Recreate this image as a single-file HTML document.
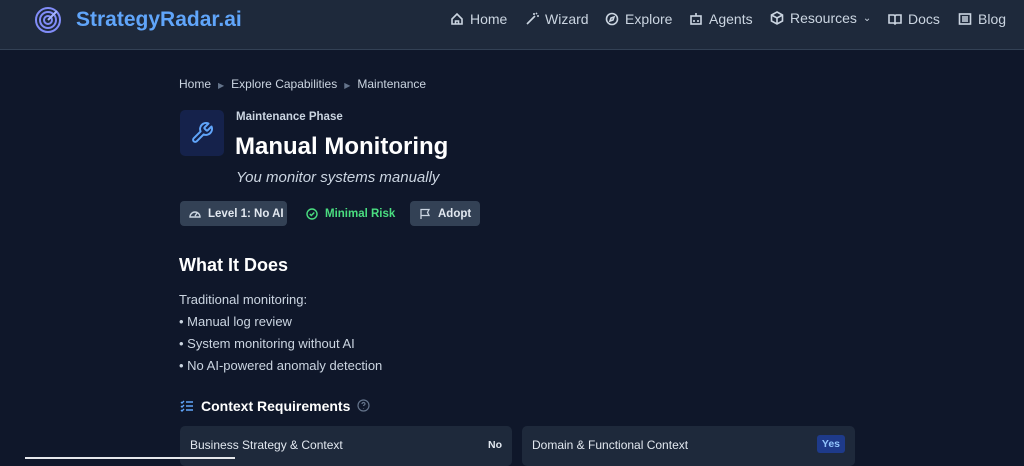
<!DOCTYPE html>
<html><head><style>
*{margin:0;padding:0;box-sizing:border-box}
body{width:1024px;height:459px;overflow:hidden;background:#0f172a;font-family:"Liberation Sans",sans-serif;color:#e2e8f0;position:relative}
.hdr{position:absolute;left:0;top:0;width:1024px;height:50px;background:#1e293b;border-bottom:1px solid #334155}
.logo{position:absolute;left:34px;top:6px}
.brand{position:absolute;left:76px;top:8px;font-size:21px;font-weight:bold;color:#60a5fa}
.nav{position:absolute;top:11px;font-size:14px;color:#cbd5e1;display:flex;align-items:center;gap:6px;white-space:nowrap}
.nav svg{stroke:#cbd5e1;fill:none;stroke-width:1.6}
.ab{position:absolute;white-space:nowrap}
.crumb{left:179px;top:77px;font-size:12px;color:#cbd5e1}
.crumb span{color:#64748b;margin:0 7px;font-size:8px}
.icon{left:180px;top:110px;width:44px;height:46px;background:#172554;border-radius:5px;opacity:.8}
.badge{position:absolute;top:201px;height:25px;border-radius:4px;font-size:11.5px;font-weight:bold;display:flex;align-items:center;gap:7px;padding:0 9px;white-space:nowrap}
.badge svg{flex-shrink:0}
.card{position:absolute;top:426px;height:40px;background:#1e293b;border-radius:5px;font-size:12px;color:#e2e8f0;padding:12px 10px}
.card b{position:absolute;right:10px;top:13px;font-size:10.5px}
</style></head><body>
<div class="hdr">
<svg class="logo" width="28" height="28" viewBox="0 0 28 28" fill="none" stroke="#818cf8" stroke-width="2"><circle cx="14" cy="14" r="12"/><circle cx="14" cy="14" r="8"/><circle cx="14" cy="14" r="4"/><path d="M14 14L23 5" stroke="#a5b4fc"/></svg>
<div class="brand">StrategyRadar.ai</div>
<div class="nav" style="left:450px"><svg width="14" height="14" viewBox="0 0 14 14"><path d="M2 7L7 2l5 5v5H2z M5.5 12V9h3v3"/></svg>Home</div>
<div class="nav" style="left:525px"><svg width="14" height="14" viewBox="0 0 14 14"><path d="M2 12L10 4M9 1v2M12 4h2M11 2l1-1"/></svg>Wizard</div>
<div class="nav" style="left:605px"><svg width="14" height="14" viewBox="0 0 14 14"><circle cx="7" cy="7" r="5.5"/><path d="M9 5L6 6 5 9l3-1z"/></svg>Explore</div>
<div class="nav" style="left:689px"><svg width="14" height="14" viewBox="0 0 14 14"><rect x="2" y="4" width="10" height="8"/><path d="M7 1v3M5 8v2M9 8v2"/></svg>Agents</div>
<div class="nav" style="left:770px;top:10px"><svg width="14" height="14" viewBox="0 0 14 14"><path d="M7 1l5.5 3v6L7 13 1.5 10V4zM1.5 4L7 7l5.5-3M7 7v6"/></svg>Resources <span style="font-size:10px">⌄</span></div>
<div class="nav" style="left:888px"><svg width="14" height="14" viewBox="0 0 14 14"><path d="M1 3h5l1 1 1-1h5v8H8l-1 1-1-1H1zM7 4v8"/></svg>Docs</div>
<div class="nav" style="left:958px"><svg width="14" height="14" viewBox="0 0 14 14"><rect x="1.5" y="2" width="11" height="10"/><path d="M4 5h6M4 7h6M4 9h6"/></svg>Blog</div>
</div>
<div class="ab crumb">Home<span>▶</span>Explore Capabilities<span>▶</span>Maintenance</div>
<div class="ab icon"></div>
<svg class="ab" style="left:190px;top:121px" width="24" height="24" viewBox="0 0 24 24" fill="none" stroke="#60a5fa" stroke-width="2" stroke-linecap="round" stroke-linejoin="round"><path d="M14.7 6.3a1 1 0 000 1.4l1.6 1.6a1 1 0 001.4 0l3.8-3.8a6 6 0 01-7.9 7.9l-6.9 6.9a2.1 2.1 0 01-3-3l6.9-6.9a6 6 0 017.9-7.9z"/></svg>
<div class="ab" style="left:236px;top:111px;font-size:11.5px;font-weight:bold;color:#cbd5e1">Maintenance Phase</div>
<div class="ab" style="left:235px;top:133px;font-size:24px;font-weight:bold;color:#fff">Manual Monitoring</div>
<div class="ab" style="left:236px;top:169px;font-size:15px;font-style:italic;color:#cbd5e1">You monitor systems manually</div>
<div class="badge" style="left:180px;width:107px;background:#334155;color:#e2e8f0"><svg width="12" height="12" viewBox="0 0 12 12" fill="none" stroke="#cbd5e1" stroke-width="1.4"><path d="M1 9a5 5 0 0110 0zM6 8l2-3"/></svg>Level 1: No AI</div>
<div class="badge" style="left:297px;color:#4ade80"><svg width="12" height="12" viewBox="0 0 12 12" fill="none" stroke="#4ade80" stroke-width="1.4"><circle cx="6" cy="6" r="5"/><path d="M3.8 6l1.5 1.5L8.3 4.5"/></svg>Minimal Risk</div>
<div class="badge" style="left:410px;width:70px;background:#334155;color:#e2e8f0"><svg width="12" height="12" viewBox="0 0 12 12" fill="none" stroke="#cbd5e1" stroke-width="1.3"><path d="M2 11V1.5h8l-1.5 3L10 7.5H2"/></svg>Adopt</div>
<div class="ab" style="left:179px;top:255px;font-size:18px;font-weight:bold;color:#fff">What It Does</div>
<div class="ab" style="left:179px;top:289px;font-size:13px;line-height:22px;color:#cbd5e1">Traditional monitoring:<br>• Manual log review<br>• System monitoring without AI<br>• No AI-powered anomaly detection</div>
<svg class="ab" style="left:180px;top:400px" width="13" height="12" viewBox="0 0 13 12" fill="none" stroke="#60a5fa" stroke-width="1.4"><path d="M1 2l1 1 2-2M1 6l1 1 2-2M1 10l1 1 2-2M6 2h7M6 6h7M6 10h7"/></svg>
<div class="ab" style="left:201px;top:398px;font-size:14px;font-weight:bold;color:#fff">Context Requirements</div>
<svg class="ab" style="left:357px;top:399px" width="13" height="13" viewBox="0 0 13 13" fill="none" stroke="#64748b" stroke-width="1.2"><circle cx="6.5" cy="6.5" r="5.5"/><path d="M5 5a1.5 1.5 0 113 0c0 1-1.5 1-1.5 2M6.5 9v.5"/></svg>
<div class="card" style="left:180px;width:332px">Business Strategy &amp; Context<b style="color:#e2e8f0">No</b></div>
<div class="card" style="left:522px;width:333px">Domain &amp; Functional Context<b style="color:#93c5fd;background:#1e3a8a;padding:3px 5px;top:9px;border-radius:3px">Yes</b></div>
<div class="ab" style="left:25px;top:457px;width:210px;height:2px;background:#e5e7eb"></div>
</body></html>
